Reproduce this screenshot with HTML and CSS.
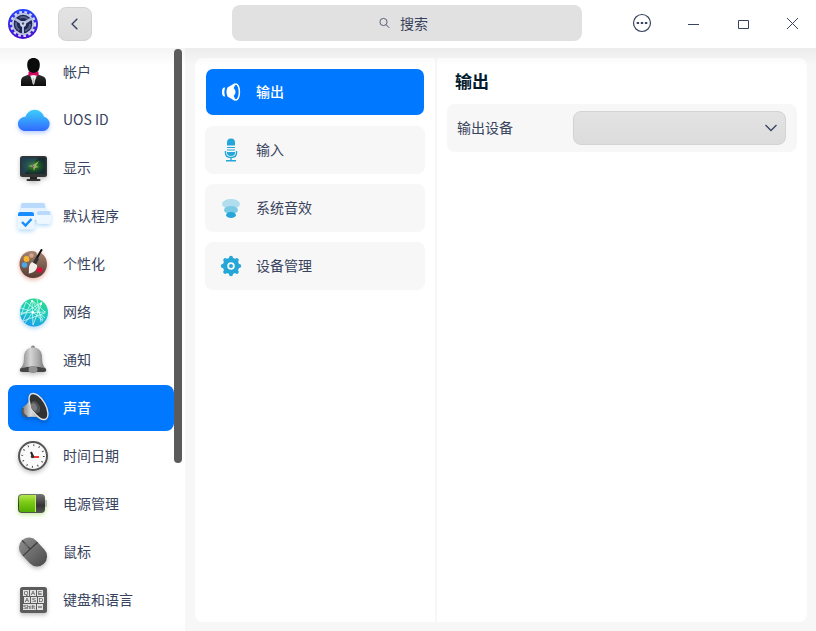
FILE: index.html
```html
<!DOCTYPE html>
<html lang="zh-CN">
<head>
<meta charset="utf-8">
<meta name="viewport" content="width=device-width, initial-scale=1">
<title>控制中心</title>
<link rel="stylesheet" href="styles.css">
</head>
<body>
<header class="titlebar">
  <div class="titlebar-start">
    <svg class="logo" viewBox="0 0 32 32" aria-hidden="true">
      <defs><linearGradient id="lg" x1="0" y1="0" x2="0" y2="1"><stop offset="0" stop-color="#2548ff"/><stop offset="1" stop-color="#4a0bd0"/></linearGradient></defs>
      <circle cx="16" cy="16" r="15" fill="url(#lg)"/>
      <circle cx="16" cy="16" r="11.8" fill="none" stroke="#d5daf2" stroke-width="2.600" stroke-dasharray="2.6 2.55"/>
      <circle cx="16" cy="16" r="11" fill="#c0c7e0"/>
      <circle cx="16" cy="16" r="9.3" fill="#1d2654"/>
      <circle cx="16" cy="16" r="7" fill="none" stroke="#56638a" stroke-width="2" stroke-dasharray="9 5.66"/>
      <path d="M15 25.500 15 17 7.500 12 9 10 16 14 23 10 24.500 12 17 17 17 25.500Z" fill="#b6bddb"/>
      <circle cx="16" cy="16" r="3" fill="#cfd5ea"/><circle cx="16" cy="15.5" r="1.2" fill="#45517d"/>
    </svg>
    <button class="back" type="button" aria-label="返回">
      <svg viewBox="0 0 12 12" aria-hidden="true"><path d="M8 1.500 3.500 6 8 10.500" fill="none" stroke="currentColor" stroke-width="1.200"/></svg>
    </button>
  </div>
  <div class="search">
    <svg viewBox="0 0 12 12" aria-hidden="true"><circle cx="5.500" cy="5" r="3.600" fill="none" stroke="currentColor" stroke-width=".8"/><path d="m8.200 7.800 3 3" stroke="currentColor" stroke-width=".9"/></svg>
    <input type="text" placeholder="搜索" aria-label="搜索">
  </div>
  <div class="window-buttons">
    <button type="button" aria-label="菜单"><svg viewBox="0 0 20 20" aria-hidden="true"><circle cx="11" cy="9" r="8.500" fill="none" stroke="currentColor" stroke-width="1.200"/><path d="M5.700 8h2.400v2H5.700zM9.800 8h2.400v2H9.800zM13.900 8h2.400v2h-2.400z" fill="currentColor"/></svg></button>
    <button type="button" aria-label="最小化"><svg viewBox="0 0 20 20" aria-hidden="true"><path d="M7 10.500h11" stroke="currentColor"/></svg></button>
    <button type="button" aria-label="最大化"><svg viewBox="0 0 20 20" aria-hidden="true"><path d="M7.500 6.500h10v8h-10z" fill="none" stroke="currentColor"/></svg></button>
    <button type="button" aria-label="关闭"><svg viewBox="0 0 20 20" aria-hidden="true"><path d="m6 4 11 11M17 4 6 15" stroke="currentColor"/></svg></button>
  </div>
</header>

<div class="body">
  <div class="sidebar">
    <nav class="nav" aria-label="设置">
      <a href="#account">
        <svg viewBox="0 0 36 36" aria-hidden="true">
          <defs><linearGradient id="suit" x1="0" y1="0" x2="0" y2="1"><stop offset="0" stop-color="#303030"/><stop offset="1" stop-color="#0c0c0c"/></linearGradient></defs>
          <path d="M6 32v-5q0-4 4-5l5-2h7l5 2q4 1 4 5v5Z" fill="url(#suit)"/>
          <path d="m15 21 3.500 10L22 21Z" fill="#eee"/><path d="M18 24h1l.8 5-1.300 2-1.300-2Z" fill="#bbb"/>
          <path d="M12.200 11c0-5 2.500-7 6.300-7s6.300 2 6.300 7-3 8.500-6.300 8.500-6.300-3.500-6.300-8.500Z" fill="#0b0b0b"/>
          <path d="m13.500 17.500 5 1.500 5-1.500v4.500l-5-1-5 1Z" fill="#d3045f"/>
        </svg>
        <span>帐户</span></a>
      <a href="#uos">
        <svg class="glow-blue" viewBox="0 0 36 36" aria-hidden="true">
          <defs><linearGradient id="cloud" x1="0" y1="0" x2="0" y2="1"><stop offset="0" stop-color="#3bd0fa"/><stop offset="1" stop-color="#3169ff"/></linearGradient></defs>
          <path d="M9 29a7.200 7.200 0 0 1 1.500-14.300A9.600 9.600 0 0 1 29 14.800 7.200 7.200 0 0 1 28 29Z" fill="url(#cloud)"/>
        </svg>
        <span>UOS ID</span></a>
      <a href="#display">
        <svg class="drop" viewBox="0 0 36 36" aria-hidden="true">
          <defs><radialGradient id="screen"><stop offset="0" stop-color="#52981a"/><stop offset=".6" stop-color="#1d4d28"/><stop offset="1" stop-color="#142c32"/></radialGradient></defs>
          <rect x="15" y="26" width="7" height="4" fill="#222"/><rect x="11.500" y="29" width="14" height="2" rx="1" fill="#333"/>
          <rect x="5" y="6" width="27" height="21" rx="2.500" fill="#353535"/>
          <rect x="6.500" y="7.500" width="24" height="16.500" rx="1" fill="url(#screen)"/>
          <path d="M6.500 7.500h17l-14 16.500h-3Z" fill="#355c87" opacity=".4"/>
          <path d="m18 15 6-4-3 5 3 1-4 1-1 3-1-4-5-1Z" fill="#8dba62"/><path d="m17 15 2 1-1 2Z" fill="#aa27ac"/>
        </svg>
        <span>显示</span></a>
      <a href="#defapp">
        <svg class="glow-sky" viewBox="0 0 36 36" aria-hidden="true">
          <rect x="6" y="5" width="24" height="17" rx="2" fill="#e6f3ff"/><path d="M6 10V7q0-2 2-2h20q2 0 2 2v3Z" fill="#b9dafd"/>
          <rect x="22" y="13" width="13.500" height="12.500" rx="2" fill="#edf7ff" stroke="#fff" stroke-width=".5"/><path d="M22 17v-2q0-2 2-2h9.500q2 0 2 2v2Z" fill="#b9dafd"/>
          <rect x="3" y="14" width="16" height="17" rx="2" fill="#e9f5ff" stroke="#fff" stroke-width=".6"/><path d="M3 18v-2q0-2 2-2h12q2 0 2 2v2Z" fill="#198dff"/>
          <path d="m7 24 3.500 3.500 6-6.500" fill="none" stroke="#168cff" stroke-width="2.400"/>
        </svg>
        <span>默认程序</span></a>
      <a href="#personal">
        <svg class="glow-red" viewBox="0 0 36 36" aria-hidden="true">
          <defs><linearGradient id="palette" x1="0" y1="0" x2="0" y2="1"><stop offset="0" stop-color="#a58571"/><stop offset="1" stop-color="#573b32"/></linearGradient></defs>
          <path d="M17 5C9 5 4.500 11 4.500 18S10 32 18 32s14-6 14-14c0-5-2.500-9-6-11l-3 3-2-4q-2-1-4-1Z" fill="url(#palette)"/>
          <circle cx="11.500" cy="13" r="2.900" fill="#f8b42d"/><circle cx="16.500" cy="9.500" r="2.300" fill="#d1a490"/><circle cx="9.500" cy="19" r="2.800" fill="#4aa7ef"/><circle cx="24.500" cy="24" r="2.800" fill="#e30b3d"/>
          <path d="M26.500 4 19.500 16" stroke="#111" stroke-width="2" stroke-linecap="round"/><path d="m22.500 12-3 5.500" stroke="#333" stroke-width="3.600"/>
          <path d="m17 16 5 3c1 5-4 8-8.500 8.500C15 25 12 20 17 16Z" fill="#f3f0eb"/>
        </svg>
        <span>个性化</span></a>
      <a href="#network">
        <svg class="glow-sky" viewBox="0 0 36 36" aria-hidden="true">
          <defs><linearGradient id="globe" x1=".7" y1="0" x2=".4" y2="1"><stop offset="0" stop-color="#2bdc8c"/><stop offset=".55" stop-color="#1dc7c0"/><stop offset="1" stop-color="#1b9cec"/></linearGradient></defs>
          <circle cx="19" cy="18.500" r="14" fill="url(#globe)"/>
          <path d="m17 6 1 25M5 19l26-1M17 6 8 27M17 6l13 12M27 8 6 21M27 8l-9 23M11 8l19 16M11 8 6 21M8 27l22-8M18 18l10 9M18 18 27 8M17 6l11 20M6 14l12 4-8 11M22 5l4 23" fill="none" stroke="#d9fff6" stroke-width=".8" opacity=".9"/>
          <circle cx="18" cy="18.500" r="1.300" fill="#fff"/><circle cx="17" cy="7" r="1" fill="#fff"/><circle cx="26" cy="10" r="1" fill="#fff"/>
        </svg>
        <span>网络</span></a>
      <a href="#notice">
        <svg class="drop" viewBox="0 0 36 36" aria-hidden="true">
          <defs><linearGradient id="bell"><stop offset="0" stop-color="#777"/><stop offset=".4" stop-color="#d5d5d5"/><stop offset=".7" stop-color="#aaa"/><stop offset="1" stop-color="#6b6b6b"/></linearGradient></defs>
          <circle cx="18" cy="5.500" r="2" fill="#888"/>
          <path d="M18 5.500c-6 0-9 4-9 9.500 0 6-1 9-4 12q-1 3 3 3h20q4 0 3-3c-3-3-4-6-4-12 0-5.500-3-9.500-9-9.500Z" fill="url(#bell)"/>
          <path d="M5.500 26.500q12.500-4 25 0 2 3.500-2.500 3.500H8q-4.500 0-2.500-3.500Z" fill="#454545"/><ellipse cx="18" cy="27.500" rx="4.500" ry="3.500" fill="#929292"/>
        </svg>
        <span>通知</span></a>
      <a href="#sound" class="current" aria-current="page">
        <svg class="drop" viewBox="0 0 36 36" aria-hidden="true">
          <defs><linearGradient id="horn"><stop offset="0" stop-color="#777"/><stop offset=".5" stop-color="#ddd"/><stop offset="1" stop-color="#888"/></linearGradient></defs>
          <path d="M8 17q5-3 7-8l10 19q-7-2-12-1-8-3-5-10Z" fill="url(#horn)"/><path d="M8 18q-2 6 4 9" fill="none" stroke="#555" stroke-width="2"/>
          <ellipse cx="23.500" cy="16.500" rx="7" ry="14.500" transform="rotate(-30 23.500 16.500)" fill="#303234" stroke="#e3e3e3" stroke-width="1.400"/>
          <ellipse cx="20.500" cy="17" rx="4" ry="6.500" transform="rotate(-28 20.500 17)" fill="#505254"/><ellipse cx="19" cy="17" rx="2.800" ry="4" transform="rotate(-25 19 17)" fill="#77797b"/>
        </svg>
        <span>声音</span></a>
      <a href="#datetime">
        <svg class="drop" viewBox="0 0 36 36" aria-hidden="true">
          <circle cx="18" cy="18" r="14" fill="#fafafa" stroke="#555" stroke-width="2"/>
          <circle cx="18" cy="18" r="10.800" fill="none" stroke="#444" stroke-width="1.800" stroke-dasharray="1 4.655"/>
          <path d="m16 14 2 4.500" stroke="#222" stroke-width="2"/><path d="M17 19h7" stroke="#f23a31" stroke-width="2"/><circle cx="17.500" cy="18.500" r="1.700" fill="#333"/>
        </svg>
        <span>时间日期</span></a>
      <a href="#power">
        <svg class="glow-green" viewBox="0 0 36 36" aria-hidden="true">
          <defs><linearGradient id="charge" x1="0" y1="0" x2="0" y2="1"><stop offset="0" stop-color="#b4e84b"/><stop offset=".4" stop-color="#7fcb18"/><stop offset="1" stop-color="#51ad00"/></linearGradient><linearGradient id="case" x1="0" y1="0" x2="0" y2="1"><stop offset="0" stop-color="#777"/><stop offset=".6" stop-color="#333"/><stop offset="1" stop-color="#555"/></linearGradient></defs>
          <rect x="28" y="14" width="4" height="7" rx="1" fill="#bbb"/><rect x="3" y="8" width="27" height="19" rx="4" fill="url(#case)"/>
          <path d="M21 9v17H7q-3 0-3-3V12q0-3 3-3Z" fill="url(#charge)"/><path d="M20.500 9v17" stroke="#c4e97b"/>
        </svg>
        <span>电源管理</span></a>
      <a href="#mouse">
        <svg class="drop" viewBox="0 0 36 36" aria-hidden="true">
          <defs><linearGradient id="mouse" x1="0" y1="0" x2="0" y2="1"><stop offset="0" stop-color="#898989"/><stop offset="1" stop-color="#505050"/></linearGradient></defs>
          <g transform="rotate(-43 18 18)"><rect x="8" y="2" width="20" height="32" rx="10" fill="url(#mouse)"/><path d="M8 14h20M18 2v12" stroke="#3d3d3d" stroke-width="1.200"/><path d="M18 6v5" stroke="#666" stroke-width="2"/></g>
        </svg>
        <span>鼠标</span></a>
      <a href="#keyboard">
        <svg class="drop" viewBox="0 0 36 36" aria-hidden="true">
          <rect x="5" y="5" width="27" height="26" rx="2.500" fill="#5c5c5c"/>
          <path d="M8 8h6v6H8zM15 8h6v6h-6zM22 8h6v6h-6zM9 15h6v6H9zM16 15h6v6h-6zM23 15h6v6h-6zM8 22h13v6H8zM22 22h6v6h-6z" fill="#e2e2e2"/>
          <g class="keycaps"><text x="11" y="13">Q</text><text x="18" y="13">A</text><text x="25" y="13">E</text><text x="12" y="20">A</text><text x="19" y="20">S</text><text x="26" y="20">D</text><text x="14" y="27">Shift</text></g>
          <path d="M23 25h4" stroke="#444"/>
        </svg>
        <span>键盘和语言</span></a>
    </nav>
    <div class="scroll-thumb" aria-hidden="true"></div>
  </div>

  <main class="content">
    <div class="card">
      <nav class="subnav" aria-label="声音">
        <a href="#output" class="current" aria-current="page">
          <svg viewBox="0 0 24 24" aria-hidden="true"><path d="M6 7.500q-1.500 4.500 0 9H5q-2-.500-2-4.500t2-4.500Z" fill="#fff"/><path d="M8.500 7.500 16 3q-3 5-2 9t2 9l-7.500-4.500q-2-4.500 0-9Z" fill="#fff"/><ellipse cx="17" cy="12" rx="3.400" ry="8" fill="#0078ff" stroke="#fff" stroke-width="1.500"/><path d="M13.500 8.500h1.500q1.500 1 1.500 3.500T15 15.500h-1.500Z" fill="#fff"/></svg>
          <span>输出</span></a>
        <a href="#input">
          <svg viewBox="0 0 24 24" aria-hidden="true"><path d="M8 7.500V4.500a4 4 0 0 1 8 0v3ZM8 9h8v1H8zM8 11.500h8v1H8zM8 14h8v1q0 3-4 3t-4-3Z" fill="#24a7d8"/><path d="M6.500 13v2q0 4.500 5.500 4.500t5.500-4.500v-2M12 19.500v3M7 22.800h10" fill="none" stroke="#24a7d8" stroke-width="1.400"/></svg>
          <span>输入</span></a>
        <a href="#effects">
          <svg viewBox="0 0 24 24" aria-hidden="true"><ellipse cx="12" cy="8" rx="9" ry="5" fill="#b0deef"/><ellipse cx="12" cy="14" rx="7" ry="4" fill="#7ac9e5"/><ellipse cx="12" cy="19" rx="5" ry="3" fill="#24a7d8"/></svg>
          <span>系统音效</span></a>
        <a href="#devices">
          <svg viewBox="0 0 24 24" aria-hidden="true"><circle cx="12" cy="12" r="6" fill="none" stroke="#24a7d8" stroke-width="4.500"/><circle cx="12" cy="12" r="2" fill="#24a7d8"/><path d="M12 3.800v2M12 18.200v2M3.800 12h2M18.200 12h2M6.200 6.200l1 1M16.800 16.800l1 1M6.200 17.800l1-1M16.800 7.200l1-1" stroke="#24a7d8" stroke-width="4" stroke-linecap="round"/></svg>
          <span>设备管理</span></a>
      </nav>
      <section class="panel">
        <h1>输出</h1>
        <div class="row">
          <label for="device">输出设备</label>
          <div class="select">
            <select id="device"></select>
            <svg viewBox="0 0 12 12" aria-hidden="true"><path d="m.5 3 5.500 5.500L11.500 3" fill="none" stroke="currentColor" stroke-width="1.300"/></svg>
          </div>
        </div>
      </section>
    </div>
  </main>
</div>
</body>
</html>
```
FILE: styles.css
```css
:root {
  --text: #38435d;
  --accent: #0078ff;
  --surface: #f7f7f7;
  --control: linear-gradient(#e3e3e3, #dcdcdc);
}

* { box-sizing: border-box; }

body {
  margin: 0;
  height: 100vh;
  display: flex;
  flex-direction: column;
  overflow: hidden;
  background: #fff;
  color: var(--text);
  font: 14px/20px "Noto Sans CJK SC", sans-serif;
}

a { color: inherit; text-decoration: none; }
button { border: 0; padding: 0; background: none; color: inherit; }
svg { display: block; flex: none; }

/* Title bar */
.titlebar {
  position: relative;
  flex: none;
  height: 48px;
  display: grid;
  grid-template-columns: calc(50% - 176px) 350px 1fr;
  align-items: center;
}
.titlebar::after {
  content: "";
  position: absolute;
  top: 100%;
  left: 0;
  right: 0;
  height: 18px;
  background: linear-gradient(rgba(0, 0, 0, .045), transparent);
  pointer-events: none;
  z-index: 1;
}
.titlebar-start { display: flex; align-items: center; gap: 19px; padding-left: 7px; }
.logo { width: 32px; height: 32px; }
.back {
  width: 34px;
  height: 34px;
  display: grid;
  place-items: center;
  border: 1px solid #d3d3d3;
  border-radius: 8px;
  background: var(--control);
}
.back svg { width: 14px; height: 14px; }

.search { position: relative; padding-bottom: 2px; }
.search svg { position: absolute; top: 12px; left: calc(50% - 29px); width: 12px; height: 12px; }
.search input {
  display: block;
  width: 100%;
  height: 36px;
  border: 0;
  border-radius: 8px;
  padding: 0 0 0 14px;
  background: #e1e1e1;
  color: inherit;
  font: inherit;
  text-align: center;
}
.search input::placeholder { color: inherit; opacity: 1; }

.window-buttons { display: flex; justify-content: flex-end; }
.window-buttons button { width: 50px; height: 46px; display: grid; place-items: center; }
.window-buttons svg { width: 20px; height: 20px; overflow: visible; }

/* Sidebar */
.body { flex: 1; min-height: 0; display: flex; }
.sidebar { position: relative; flex: none; width: 185px; }
.nav {
  height: 100%;
  overflow: hidden;
  display: flex;
  flex-direction: column;
  gap: 2px;
  padding: 1px 11px 0 8px;
}
.nav a {
  flex: none;
  height: 46px;
  display: flex;
  align-items: center;
  gap: 12px;
  padding-left: 7px;
  border-radius: 8px;
}
.nav svg { width: 36px; height: 36px; overflow: visible; }
.nav span, .subnav span, .row label { padding-bottom: 2px; }
.nav .current, .subnav .current { background-color: var(--accent); color: #fff; font-weight: 500; }
.scroll-thumb {
  position: absolute;
  top: 1px;
  right: 3px;
  width: 8px;
  height: 71%;
  border-radius: 4px;
  background: #5b5b5b;
  z-index: 2;
}

.drop { filter: drop-shadow(0 2px 2px rgba(0, 0, 0, .25)); }
.glow-blue { filter: drop-shadow(0 2px 2px rgba(49, 105, 255, .35)); }
.glow-sky { filter: drop-shadow(0 2px 2px rgba(30, 150, 235, .35)); }
.glow-red { filter: drop-shadow(0 2px 2px rgba(200, 70, 40, .4)); }
.glow-green { filter: drop-shadow(0 2px 2px rgba(120, 200, 20, .4)); }
.keycaps { font: 6px "Liberation Sans", sans-serif; text-anchor: middle; fill: #333; }

/* Content */
.content { flex: 1; min-width: 0; padding: 10px 9px 9px 10px; background: var(--surface); }
.card { height: 100%; display: flex; border-radius: 8px; background: #fff; }
.subnav {
  flex: 0 0 242px;
  display: flex;
  flex-direction: column;
  gap: 10px;
  padding: 10px;
  border-right: 2px solid var(--surface);
}
.subnav a {
  height: 48px;
  display: flex;
  align-items: center;
  gap: 13px;
  padding-left: 14px;
  border-radius: 8px;
  background: var(--surface);
}
.subnav .current {
  padding-left: 13px;
  border: 1px solid transparent;
  background-clip: padding-box;
}
.subnav svg { width: 24px; height: 24px; }

.panel { flex: 1; min-width: 0; padding: 10px; }
h1 {
  margin: 0;
  padding: 0 0 10px 8px;
  color: #001a2e;
  font-size: 17px;
  line-height: 26px;
  font-weight: 700;
}
.row {
  display: grid;
  grid-template-columns: 1fr 2fr;
  align-items: center;
  gap: 10px;
  height: 48px;
  padding: 0 11px 0 10px;
  border-radius: 8px;
  background: var(--surface);
}
.select { position: relative; }
.select select {
  display: block;
  width: 100%;
  height: 34px;
  appearance: none;
  border: 1px solid #d3d3d3;
  border-radius: 8px;
  background: var(--control);
  color: inherit;
  font: inherit;
}
.select svg { position: absolute; top: 11px; right: 9px; width: 12px; height: 12px; pointer-events: none; }
```
